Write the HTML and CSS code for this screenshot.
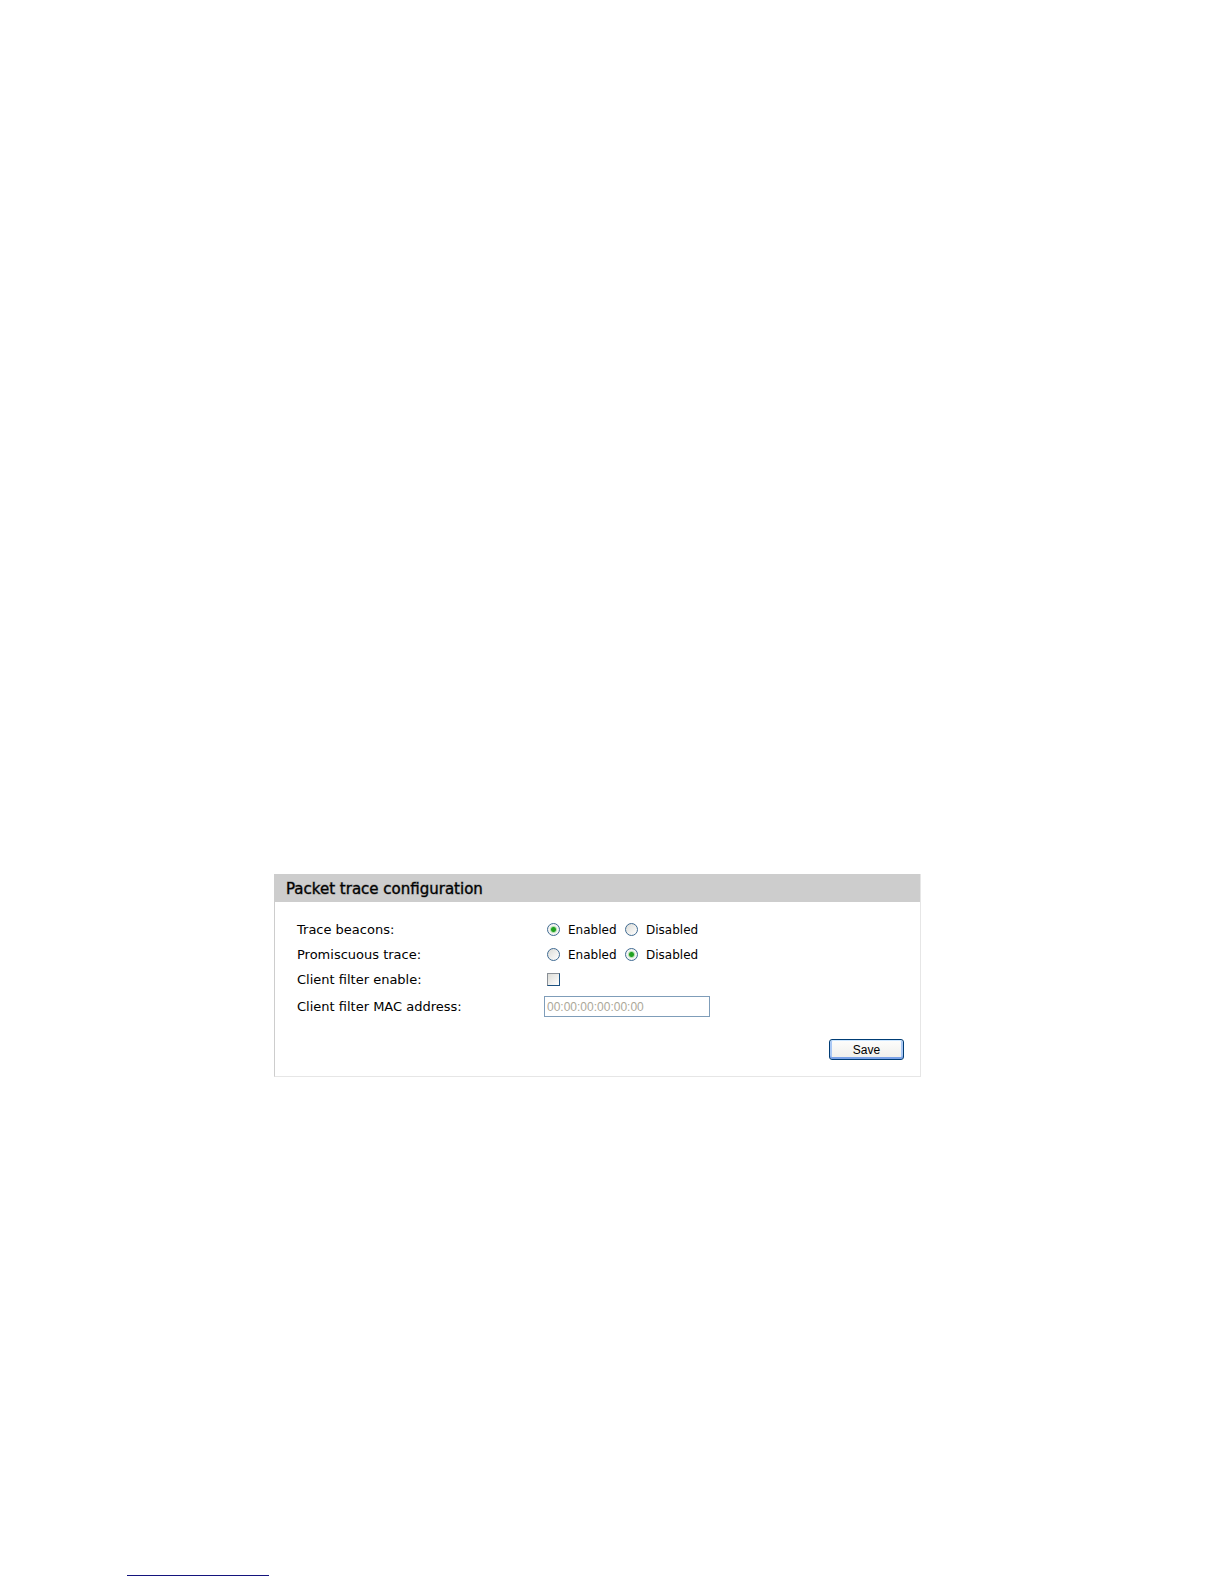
FILE: index.html
```html
<!DOCTYPE html>
<html lang="en">
<head>
  <meta charset="UTF-8">
  <title>Packet trace configuration</title>
  <meta name="viewport" content="width=device-width, initial-scale=1.0">
  <link rel="stylesheet" href="styles.css">
</head>
<body>

  <main>
    <form class="panel">
      <h2>Packet trace configuration</h2>
      <div class="fields">
        <div class="row" role="radiogroup" aria-labelledby="beacons-label">
          <span class="name" id="beacons-label">Trace beacons:</span>
          <label class="option"><input type="radio" name="beacons" value="1" checked> Enabled</label>
          <label class="option"><input type="radio" name="beacons" value="0"> Disabled</label>
        </div>
        <div class="row" role="radiogroup" aria-labelledby="promiscuous-label">
          <span class="name" id="promiscuous-label">Promiscuous trace:</span>
          <label class="option"><input type="radio" name="promiscuous" value="1"> Enabled</label>
          <label class="option"><input type="radio" name="promiscuous" value="0" checked> Disabled</label>
        </div>
        <div class="row">
          <label class="name" for="filter-enable">Client filter enable:</label>
          <input type="checkbox" id="filter-enable">
        </div>
        <div class="row mac-row">
          <label class="name" for="filter-mac">Client filter MAC address:</label>
          <input type="text" id="filter-mac" value="00:00:00:00:00:00" disabled>
        </div>
      </div>
      <div class="actions">
        <button type="submit">Save</button>
      </div>
    </form>
  </main>

  <footer>
    <a href="#" class="footer-link" aria-label="Back to top"></a>
  </footer>

</body>
</html>
```

FILE: styles.css
```css
* {
  box-sizing: border-box;
}

body {
  margin: 0;
  min-height: 100vh;
  display: flex;
  flex-direction: column;
  background: white;
  color: black;
  font-family: "DejaVu Sans", Verdana, sans-serif;
  font-size: 12px;
}

main {
  flex: 1;
  padding: 874px 303px 20px 274px;
}

.panel {
  border: 1px solid #e6e6e6;
  border-top: none;
  border-left-color: #cdcdcd;
}

h2 {
  margin: 0 0 0 -1px;
  padding: 2px 0 0 12px;
  background: #cdcdcd;
  font-size: 15px;
  font-weight: normal;
  line-height: 26px;
  -webkit-text-stroke: 1px rgba(0, 0, 0, 0.4);
}

.fields {
  padding: 15px 22px 0;
}

.row {
  display: flex;
  align-items: center;
  height: 25px;
}

.mac-row {
  height: 29px;
}

.name {
  width: 247px;
  font-size: 13px;
}

.option {
  display: flex;
  align-items: center;
  width: 78px;
  white-space: nowrap;
}

input[type="radio"],
input[type="checkbox"] {
  appearance: none;
  width: 13px;
  height: 13px;
  margin: 0 8px 0 3px;
  border: 1px solid #1c5180;
  background: linear-gradient(135deg, #dcdcd7, #ffffff);
}

input[type="checkbox"] {
  border-top-color: #8a9097;
  border-left-color: #8a9097;
}

input[type="radio"] {
  border-color: #3f6a92;
  border-radius: 50%;
}

input[type="radio"]:checked {
  background: radial-gradient(circle, #21a121 0 2px, #b5e0b2 3px, #f4f4f2 4px);
}

input[type="text"] {
  width: 166px;
  height: 21px;
  padding: 0 2px;
  border: 1px solid #7f9db9;
  background: white;
  color: #aca899;
  font-family: "Liberation Sans", Arial, sans-serif;
  font-size: 12px;
}

.actions {
  display: flex;
  justify-content: flex-end;
  padding: 18px 16px 16px;
}

button {
  width: 75px;
  height: 21px;
  padding: 0;
  border: 1px solid #003c74;
  border-radius: 3px;
  background: linear-gradient(#fdfdfc, #efeeea);
  box-shadow: inset 0 1px #cee7ff, inset 0 -2px #7ba2e7, inset 2px 0 #a9c8f5, inset -2px 0 #a9c8f5;
  color: black;
  font-family: "Liberation Sans", Arial, sans-serif;
  font-size: 12px;
}

footer {
  padding: 0 127px 8px;
}

.footer-link {
  display: block;
  width: 142px;
  border-bottom: 1px solid #14147d;
}
```
